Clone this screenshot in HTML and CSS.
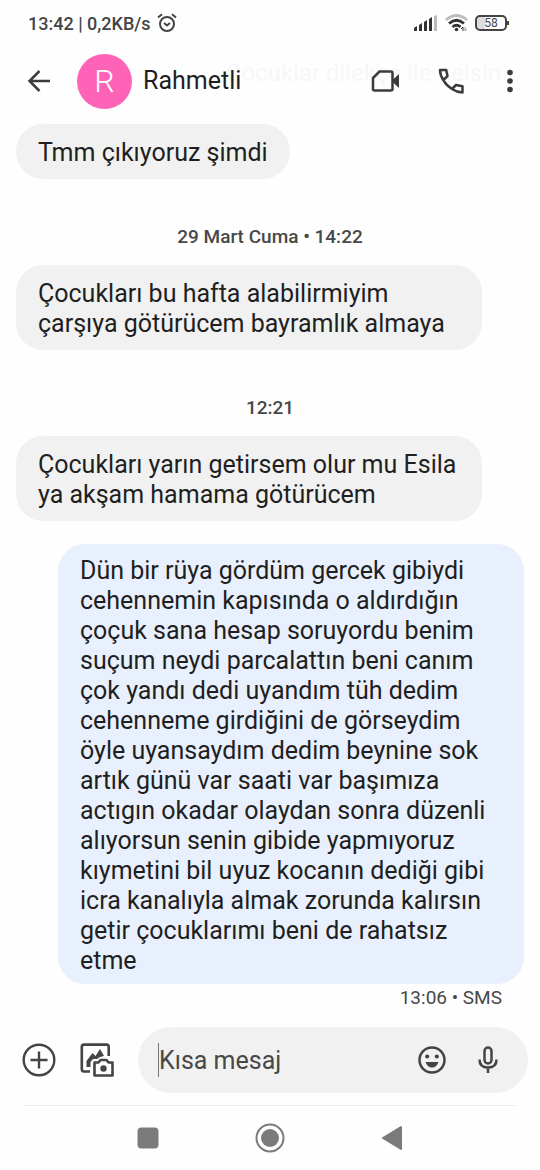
FILE: index.html
```html
<!DOCTYPE html>
<html lang="tr">
<head>
<meta charset="utf-8">
<meta name="viewport" content="width=device-width, initial-scale=1">
<title>Rahmetli</title>
<link rel="stylesheet" href="styles.css">
</head>
<body>
<div class="status">
  <span class="status-text">13:42 | 0,2KB/s</span>
  <svg class="alarm" width="20" height="20" viewBox="0 0 20 20" fill="none" stroke="#444" stroke-width="2"><circle cx="10" cy="11" r="7"/><path d="M1 4.500 5 1.200M19 4.500 15 1.200M7 10l3 2.500 3-2.500"/></svg>
  <span class="spacer"></span>
  <svg width="24" height="16" viewBox="0 0 24 16"><path fill="#333" d="M0 13l3-2v5H0zM5 10l3-2v8H5zM10 7l3-2v11h-3zM15 4l3-2v14h-3z"/><path fill="#bbb" d="M20 1l3-1v16h-3z"/></svg>
  <svg class="wifi" width="24" height="18" viewBox="0 0 24 18" fill="none" stroke-width="2.800"><path stroke="#bbb" d="M1 6Q11.500-3 22 6"/><path stroke="#333" d="M4 9.500Q11.500 3 19 9.500M7.500 13Q11.500 9.500 15.500 13"/><circle cx="11.500" cy="15.500" r="1.800" fill="#333"/><path stroke="#333" stroke-width="1" d="M18 17v-4l-2 2"/><path stroke="#999" stroke-width="1" d="M20 13v4l2-2"/></svg>
  <span class="battery">58</span>
</div>
<header class="bar">
  <span class="ghost" aria-hidden="true">Çocuklar dilekçe ile gelsin</span>
  <button class="icon back" aria-label="Geri"><svg width="24" height="24" viewBox="0 0 24 24" fill="none" stroke="#3a3d40" stroke-width="2.500"><path d="M23 12H3M12.500 2 2.500 12l10 10"/></svg></button>
  <span class="avatar">R</span>
  <h1 class="name">Rahmetli</h1>
  <button class="icon" aria-label="Görüntülü arama"><svg width="28" height="24" viewBox="0 0 28 24" fill="none" stroke="#3a3d40" stroke-width="2.500" stroke-linejoin="round"><path d="M8.500 2.500H20a1.500 1.500 0 0 1 1.500 1.500v16a1.500 1.500 0 0 1-1.500 1.500H3.500a1.500 1.500 0 0 1-1.500-1.500V9z"/><path fill="#3a3d40" stroke="none" d="M22 10.500l6-5.500v14l-6-5.500z"/></svg></button>
  <button class="icon phone" aria-label="Ara"><svg width="28" height="28" viewBox="0 0 28 28" fill="none" stroke="#3a3d40" stroke-width="2.500" stroke-linejoin="round"><path d="M3 3h6.200l1.300 6-4.200 4.200C5 11 3 7 3 3zM6.300 13.200C8.500 17 11 19.800 15 22l4-4 6.500 1.300V25.500C21.500 25.500 18 24 15 22"/></svg></button>
  <button class="icon" aria-label="Diğer seçenekler"><svg width="8" height="24" viewBox="0 0 8 24" fill="#3a3d40"><circle cx="4" cy="3.500" r="2.800"/><circle cx="4" cy="12" r="2.800"/><circle cx="4" cy="20.500" r="2.800"/></svg></button>
</header>
<main class="thread">
  <p class="bubble">Tmm çıkıyoruz şimdi</p>
  <time class="stamp">29 Mart Cuma • 14:22</time>
  <p class="bubble">Çocukları bu hafta alabilirmiyim çarşıya götürücem bayramlık almaya</p>
  <time class="stamp">12:21</time>
  <p class="bubble">Çocukları yarın getirsem olur mu Esila ya akşam hamama götürücem</p>
  <p class="bubble sent">Dün bir rüya gördüm gercek gibiydi cehennemin kapısında o aldırdığın çoçuk sana hesap soruyordu benim suçum neydi parcalattın beni canım çok yandı dedi uyandım tüh dedim cehenneme girdiğini de görseydim öyle uyansaydım dedim beynine sok artık günü var saati var başımıza actıgın okadar olaydan sonra düzenli alıyorsun senin gibide yapmıyoruz kıymetini bil uyuz kocanın dediği gibi icra kanalıyla almak zorunda kalırsın getir çocuklarımı beni de rahatsız etme</p>
  <p class="meta">13:06 • SMS</p>
</main>
<form class="composer">
  <button type="button" class="icon" aria-label="Ekle"><svg width="34" height="34" viewBox="0 0 34 34" fill="none" stroke="#444" stroke-width="2.400"><circle cx="17" cy="17" r="15.300"/><path d="M17 8.500v17M8.500 17h17"/></svg></button>
  <button type="button" class="icon gallery" aria-label="Galeri"><svg width="34" height="34" viewBox="0 0 34 34" fill="none" stroke="#444" stroke-width="2.600" stroke-linejoin="round"><path d="M10 28.500H4A2.200 2.200 0 0 1 1.800 26.300V3.800A2.200 2.200 0 0 1 4 1.600h22.500A2.200 2.200 0 0 1 28.700 3.800V13"/><path fill="#444" stroke="none" d="M6.500 24v-6l6-8 3 3 4.500-7 4 7-4 1-3 2h-4l-2.500 3v5z"/><path d="M14.500 19.500h4l2-2.500h6l2 2.500h4v13h-18z"/><circle cx="23.500" cy="25.500" r="3.200" fill="#444" stroke="none"/></svg></button>
  <div class="field">
    <span class="caret"></span>
    <input class="input" type="text" placeholder="Kısa mesaj" aria-label="Kısa mesaj">
    <button type="button" class="icon" aria-label="Emoji"><svg width="28" height="28" viewBox="0 0 28 28" fill="none" stroke="#444" stroke-width="2.500"><circle cx="14" cy="14" r="12.500"/><g fill="#444" stroke="none"><circle cx="9.200" cy="10.500" r="2.100"/><circle cx="18.800" cy="10.500" r="2.100"/><path d="M7.500 16h13c-1 3.500-3.500 5.500-6.500 5.500S8.500 19.500 7.500 16z"/></g></svg></button>
    <button type="button" class="icon mic" aria-label="Sesli mesaj"><svg width="20" height="28" viewBox="0 0 20 28" fill="none" stroke="#444" stroke-width="2.500"><rect x="6.500" y="1.500" width="7" height="16" rx="3.500"/><path d="M1.500 13.500C1.500 19 5 21.500 10 21.500s8.500-2.500 8.500-8M10 21.500V27"/></svg></button>
  </div>
</form>
<nav class="nav">
  <button class="icon" aria-label="Son uygulamalar"><svg width="30" height="30" viewBox="0 0 30 30"><rect x="4.500" y="4.500" width="21" height="21" rx="4" fill="#7b7b7b"/></svg></button>
  <button class="icon" aria-label="Ana ekran"><svg width="30" height="30" viewBox="0 0 30 30"><circle cx="15" cy="15" r="13.500" fill="none" stroke="#7b7b7b" stroke-width="2"/><circle cx="15" cy="15" r="9" fill="#7b7b7b"/></svg></button>
  <button class="icon" aria-label="Geri"><svg width="30" height="30" viewBox="0 0 30 30"><path d="M6 15 24 4v22z" fill="#7b7b7b" stroke="#7b7b7b" stroke-width="2" stroke-linejoin="round"/></svg></button>
</nav>
</body>
</html>
```
FILE: styles.css
```css
* { box-sizing: border-box; }
body {
  margin: 0;
  min-height: 100vh;
  display: flex;
  flex-direction: column;
  background: #fefefe;
  color: #1f1f1f;
  font-family: Roboto, "Noto Sans", sans-serif;
}
svg { display: block; }
.icon {
  display: flex;
  padding: 0;
  border: 0;
  background: none;
  flex: none;
}
.status {
  display: flex;
  align-items: center;
  height: 46px;
  padding: 0 33px 0 28px;
  color: #444;
}
.status-text { font-size: 18px; font-weight: 500; }
.alarm { margin-left: 6px; }
.spacer { flex: 1; }
.wifi { margin: 0 6px 0 7px; }
.battery {
  position: relative;
  width: 32px;
  height: 16px;
  border: 2px solid #444;
  border-radius: 5px;
  background: linear-gradient(to right, #ddd 30%, #fefefe 30%);
  font-size: 12px;
  line-height: 12px;
  text-align: center;
}
.battery::after {
  content: "";
  position: absolute;
  right: -4px;
  top: 4px;
  width: 2px;
  height: 4px;
  background: #444;
}
.bar {
  position: relative;
  display: flex;
  align-items: center;
  height: 70px;
  padding: 0 26px 0 27px;
}
.ghost {
  position: absolute;
  right: 39px;
  top: 12px;
  font-size: 24px;
  line-height: 30px;
  color: #f7f7f7;
}
.avatar {
  width: 55px;
  height: 55px;
  margin: 0 11px 0 26px;
  border-radius: 50%;
  background: #ff63b8;
  color: #fff;
  font-size: 32px;
  line-height: 55px;
  font-weight: 300;
  text-align: center;
}
.name {
  position: relative;
  flex: 1;
  margin: 0;
  font-size: 25px;
  line-height: 30px;
  font-weight: 400;
}
.bar .icon { position: relative; }
.bar .phone { margin: 0 41px 0 38px; }
.thread {
  flex: 1;
  display: flex;
  flex-direction: column;
  align-items: flex-start;
  padding: 8px 16px 0;
}
.bubble {
  margin: 0;
  max-width: 466px;
  padding: 14px 22px 11px;
  border-radius: 27px;
  background: #f1f1f1;
  font-size: 25px;
  line-height: 30px;
}
.stamp {
  align-self: center;
  margin: 47px 0 17px;
  color: #484848;
  font-size: 19px;
  line-height: 22px;
  font-weight: 500;
}
.sent {
  align-self: flex-end;
  margin-top: 23px;
  padding: 12px 22px 8px;
  background: #e8effd;
}
.meta {
  align-self: flex-end;
  margin: 3px 22px 0 0;
  color: #484848;
  font-size: 19px;
  line-height: 22px;
}
.composer {
  display: flex;
  align-items: center;
  padding: 0 12px 12px 22px;
}
.gallery { margin: 0 24px; }
.field {
  flex: 1;
  display: flex;
  align-items: center;
  height: 66px;
  min-width: 0;
  padding: 0 30px 0 20px;
  border-radius: 33px;
  background: #f1f1f1;
}
.caret {
  width: 1px;
  height: 34px;
  background: #777;
}
.input {
  flex: 1;
  min-width: 0;
  padding: 2px 0 0;
  border: 0;
  outline: 0;
  background: none;
  font: inherit;
  font-size: 25px;
  line-height: 30px;
}
.input::placeholder { color: #484848; opacity: 1; }
.mic { margin-left: 32px; }
.nav {
  display: flex;
  justify-content: center;
  gap: 92px;
  margin: 0 24px;
  padding: 17px 0;
  border-top: 1px solid #eee;
}
```
